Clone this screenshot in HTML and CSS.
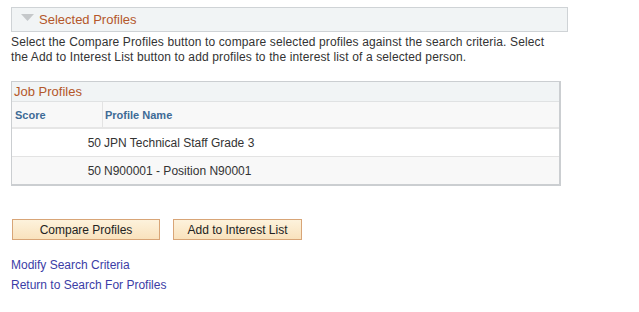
FILE: index.html
```html
<!DOCTYPE html>
<html>
<head>
<meta charset="utf-8">
<link rel="stylesheet" href="styles.css">
</head>
<body>
<div class="page">
  <div class="section-head">
    <svg class="tri" width="13" height="8" viewBox="0 0 13 8"><polygon points="0,0 13,0 6.5,7" fill="#c5c8ca"/></svg>
    <span class="section-title">Selected Profiles</span>
  </div>
  <p class="desc">Select the Compare Profiles button to compare selected profiles against the search criteria. Select the Add to Interest List button to add profiles to the interest list of a selected person.</p>
  <div class="grid">
    <div class="grid-title">Job Profiles</div>
    <div class="row head">
      <div class="c-score">Score</div>
      <div class="c-name">Profile Name</div>
    </div>
    <div class="row r1">
      <div class="c-score num">50</div>
      <div class="c-name">JPN Technical Staff Grade 3</div>
    </div>
    <div class="row r2">
      <div class="c-score num">50</div>
      <div class="c-name">N900001 - Position N90001</div>
    </div>
  </div>
  <div class="buttons">
    <button class="btn b1">Compare Profiles</button>
    <button class="btn b2">Add to Interest List</button>
  </div>
  <div class="links">
    <a href="#">Modify Search Criteria</a>
    <a href="#">Return to Search For Profiles</a>
  </div>
</div>
</body>
</html>
```
FILE: styles.css
```css
html, body { margin: 0; padding: 0; background: #fff; }
body { font-family: "Liberation Sans", Arial, sans-serif; font-size: 12px; color: #333; }
.page { padding: 7px 0 0 11px; width: 557px; }
.section-head {
  height: 23px; border: 1px solid #cfd3d6; background: #f1f4f5;
  display: flex; align-items: center; box-sizing: content-box;
}
.tri { margin-left: 9px; margin-right: 5px; margin-top: -4px; }
.section-title { color: #b4572a; font-size: 13px; }
.desc { margin: 3px 0 0 0; line-height: 15px; color: #333; width: 545px; letter-spacing: 0.13px; }
.grid {
  margin-top: 16px; width: 547px; border: 1px solid #cbced1; border-right-width: 2px; border-bottom-width: 2px;
  background: #fff;
}
.grid-title { height: 19px; line-height: 19px; padding-left: 2px; color: #b4572a; font-size: 13px; background: #f1f4f5; border-bottom: 1px solid #e0e2e3; }
.row { display: flex; height: 26px; align-items: center; }
.row.head { background: #f8f8f8; font-weight: bold; color: #3e6b96; font-size: 11px; border-bottom: 2px solid #e6e6e6; height: 25px; }
.row.r1 { background: #fff; border-bottom: 1px solid #e3e3e3; height: 27px; }
.row.r2 { background: #f8f8f8; height: 27px; }
.c-score { width: 86px; padding-left: 3px; padding-right: 1px; align-self: stretch; display: flex; align-items: center; border-right: 1px solid #e3e3e3; }
.row.r1 .c-score, .row.r2 .c-score { border-right: none; }
.c-score.num { justify-content: flex-end; }
.c-name { padding-left: 2px; }
.row.head .c-name { padding-left: 2px; }
.buttons { margin-top: 33px; display: flex; gap: 13px; padding-left: 1px; }
.btn {
  font-family: "Liberation Sans", Arial, sans-serif; font-size: 12px; color: #222;
  height: 21px; border: 1px solid #d8a577; background: linear-gradient(#fdf2dc, #f9e2bd);
  padding: 0; margin: 0; border-radius: 0;
}
.b1 { width: 148px; }
.b2 { width: 129px; }
.links { margin-top: 18px; display: flex; flex-direction: column; gap: 5px; }
.links a { color: #3b3da6; text-decoration: none; line-height: 15px; }
```
